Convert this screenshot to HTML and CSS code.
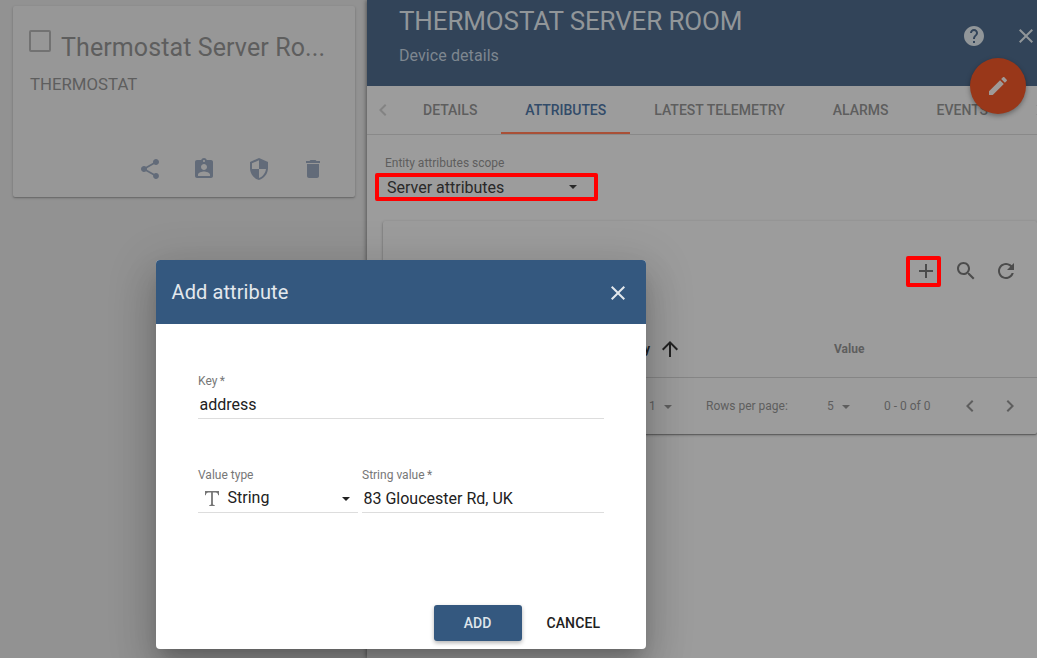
FILE: index.html
```html
<!DOCTYPE html>
<html lang="en">
<head>
<meta charset="utf-8">
<title>Device details</title>
<link rel="stylesheet" href="styles.css">
</head>
<body>
<div class="page">
  <aside class="devices">
    <article class="card">
      <div class="card-head"><span class="checkbox"></span><h2>Thermostat Server Ro...</h2></div>
      <p class="card-type">THERMOSTAT</p>
      <div class="card-actions">
        <svg class="icon" viewBox="0 0 24 24"><path d="M18 16.08c-.76 0-1.44.3-1.96.77L8.91 12.7c.05-.23.09-.46.09-.7s-.04-.47-.09-.7l7.05-4.11c.54.5 1.25.81 2.04.81 1.66 0 3-1.34 3-3s-1.34-3-3-3-3 1.34-3 3c0 .24.04.47.09.7L8.04 9.81C7.5 9.31 6.79 9 6 9c-1.66 0-3 1.34-3 3s1.34 3 3 3c.79 0 1.5-.31 2.04-.81l7.12 4.16c-.05.21-.08.43-.08.65 0 1.61 1.31 2.92 2.92 2.92s2.92-1.31 2.92-2.92-1.31-2.92-2.92-2.92z"/></svg>
        <svg class="icon" viewBox="0 0 24 24"><path d="M19 3h-4.18C14.4 1.84 13.3 1 12 1s-2.4.84-2.82 2H5c-1.1 0-2 .9-2 2v14c0 1.1.9 2 2 2h14c1.1 0 2-.9 2-2V5c0-1.1-.9-2-2-2zm-7 0c.55 0 1 .45 1 1s-.45 1-1 1-1-.45-1-1 .45-1 1-1zm0 4c1.66 0 3 1.34 3 3s-1.34 3-3 3-3-1.34-3-3 1.34-3 3-3zm6 12H6v-1.4c0-2 4-3.1 6-3.1s6 1.1 6 3.1V19z"/></svg>
        <svg class="icon" viewBox="0 0 24 24"><path d="M12 1L3 5v6c0 5.55 3.84 10.74 9 12 5.16-1.26 9-6.45 9-12V5l-9-4zm0 10.99h7c-.53 4.12-3.28 7.79-7 8.94V12H5V6.3l7-3.11v8.8z"/></svg>
        <svg class="icon" viewBox="0 0 24 24"><path d="M6 19c0 1.100.9 2 2 2h8c1.100 0 2-.9 2-2V7H6v12zM19 4h-3.500l-1-1h-5l-1 1H5v2h14V4z"/></svg>
      </div>
    </article>
  </aside>

  <main class="panel">
    <header class="panel-head">
      <div class="titles"><h1>THERMOSTAT SERVER ROOM</h1><p>Device details</p></div>
      <div class="head-tools">
        <svg class="icon" viewBox="0 0 24 24"><path d="M12 2C6.480 2 2 6.480 2 12s4.480 10 10 10 10-4.480 10-10S17.520 2 12 2zm1 17h-2v-2h2v2zm2.070-7.750l-.9.920C13.450 12.900 13 13.500 13 15h-2v-.5c0-1.100.45-2.100 1.170-2.830l1.240-1.260c.37-.36.59-.86.59-1.410 0-1.100-.9-2-2-2s-2 .9-2 2H8c0-2.210 1.790-4 4-4s4 1.790 4 4c0 .88-.36 1.680-.93 2.250z"/></svg>
        <svg class="icon" viewBox="0 0 24 24"><path d="M19 6.410L17.590 5 12 10.590 6.410 5 5 6.410 10.590 12 5 17.590 6.410 19 12 13.410 17.590 19 19 17.590 13.410 12z"/></svg>
      </div>
      <button class="fab" aria-label="Edit"><svg class="icon" viewBox="0 0 24 24"><path d="M3 17.250V21h3.750L17.810 9.940l-3.750-3.750L3 17.250zM20.710 7.040c.39-.39.39-1.020 0-1.410l-2.340-2.340c-.39-.39-1.020-.39-1.410 0l-1.830 1.830 3.750 3.750 1.830-1.830z"/></svg></button>
    </header>

    <nav class="tabs">
      <svg class="tab-arrow prev" viewBox="0 0 24 24"><path d="M15.410 7.410L14 6l-6 6 6 6 1.410-1.410L10.830 12z"/></svg>
      <a class="tab">DETAILS</a>
      <a class="tab active">ATTRIBUTES</a>
      <a class="tab telemetry">LATEST TELEMETRY</a>
      <a class="tab">ALARMS</a>
      <a class="tab">EVENTS</a>
      <svg class="tab-arrow next" viewBox="0 0 24 24"><path d="M10 6L8.590 7.410 13.170 12l-4.580 4.590L10 18l6-6z"/></svg>
    </nav>

    <section class="scope">
      <label>Entity attributes scope</label>
      <div class="scope-select"><span>Server attributes</span><i class="caret"></i></div>
    </section>

    <section class="table">
      <div class="toolbar">
        <span class="add-mark"><svg class="icon" viewBox="0 0 24 24"><path d="M19 13h-6v6h-2v-6H5v-2h6V5h2v6h6v2z"/></svg></span>
        <svg class="icon" viewBox="0 0 24 24"><path d="M15.500 14h-.79l-.28-.27C15.410 12.590 16 11.110 16 9.500 16 5.910 13.090 3 9.500 3S3 5.910 3 9.500 5.910 16 9.500 16c1.610 0 3.090-.59 4.230-1.570l.27.28v.79l5 4.990L20.490 19l-4.990-5zm-6 0C7.010 14 5 11.990 5 9.500S7.010 5 9.500 5 14 7.010 14 9.500 11.990 14 9.500 14z"/></svg>
        <svg class="icon" viewBox="0 0 24 24"><path d="M17.650 6.350C16.200 4.900 14.210 4 12 4c-4.420 0-7.990 3.580-7.990 8s3.570 8 7.990 8c3.730 0 6.840-2.550 7.730-6h-2.080c-.82 2.330-3.040 4-5.650 4-3.310 0-6-2.690-6-6s2.690-6 6-6c1.660 0 3.140.69 4.220 1.780L13 11h7V4l-2.350 2.350z"/></svg>
      </div>
      <div class="table-head">
        <span class="col-key">Key</span>
        <svg class="icon sort" viewBox="0 0 24 24"><path d="M4 12l1.410 1.410L11 7.830V20h2V7.830l5.580 5.590L20 12l-8-8-8 8z"/></svg>
        <span class="col-value">Value</span>
      </div>
      <div class="pager">
        <span class="page-no">1</span><i class="caret"></i>
        <span class="rows-label">Rows per page:</span>
        <span class="rows-no">5</span><i class="caret"></i>
        <span class="range">0 - 0 of 0</span>
        <svg class="icon" viewBox="0 0 24 24"><path d="M15.410 7.410L14 6l-6 6 6 6 1.410-1.410L10.830 12z"/></svg>
        <svg class="icon" viewBox="0 0 24 24"><path d="M10 6L8.590 7.410 13.170 12l-4.580 4.590L10 18l6-6z"/></svg>
      </div>
    </section>
  </main>
</div>

<div class="dialog" role="dialog">
  <header class="dialog-head">
    <h2>Add attribute</h2>
    <svg class="icon" viewBox="0 0 24 24"><path d="M19 6.410L17.590 5 12 10.590 6.410 5 5 6.410 10.590 12 5 17.590 6.410 19 12 13.410 17.590 19 19 17.590 13.410 12z"/></svg>
  </header>
  <div class="dialog-body">
    <div class="field">
      <label>Key<span class="req">*</span></label>
      <div class="value">address</div>
    </div>
    <div class="row">
      <div class="field type">
        <label>Value type</label>
        <div class="value">
          <svg class="type-icon" viewBox="0 0 14 15"><path d="M0 0H14V4.200H13.200C12.900 2.300 12.200 1.400 10.500 1.400H7.900V12.500C7.900 13.600 8.400 14.100 9.800 14.200V15H4.200V14.200C5.600 14.100 6.100 13.600 6.100 12.500V1.400H3.500C1.800 1.400 1.100 2.300.8 4.200H0Z"/></svg>
          <span>String</span><i class="caret"></i>
        </div>
      </div>
      <div class="field string">
        <label>String value<span class="req">*</span></label>
        <div class="value">83 Gloucester Rd, UK</div>
      </div>
    </div>
  </div>
  <footer class="dialog-actions">
    <button class="btn primary">ADD</button>
    <button class="btn cancel">CANCEL</button>
  </footer>
</div>
</body>
</html>
```
FILE: styles.css
```css
* { box-sizing: border-box; }
body { margin: 0; width: 1037px; height: 658px; overflow: hidden; position: relative; font-family: Roboto, "Liberation Sans", sans-serif; background: #929292; }
h1, h2, p { margin: 0; font-weight: 400; }
button { border: 0; padding: 0; background: none; font: inherit; }
.icon { width: 24px; height: 24px; fill: currentColor; flex: none; display: block; }
.caret { width: 0; height: 0; border: 4px solid transparent; border-top-color: currentColor; border-bottom: 0; flex: none; }
.page { display: flex; height: 658px; }

.devices { width: 367px; flex: none; padding: 6px 12px 0 13px; }
.card { height: 191px; padding: 23px 30px 0 16px; display: flex; flex-direction: column; background: #979797; border-radius: 2px; box-shadow: 0 1px 3px rgba(0,0,0,.2), 0 1px 1px rgba(0,0,0,.14); color: #5e5e5e; }
.card-head { display: flex; height: 36px; gap: 10px; }
.checkbox { width: 22px; height: 22px; margin-top: 1px; border: 2px solid #727272; border-radius: 2px; flex: none; }
.card-head h2 { font-size: 25px; line-height: 38px; white-space: nowrap; letter-spacing: .1px; }
.card-type { font-size: 16.800px; line-height: 24px; margin-top: 7px; padding-left: 1px; }
.card-actions { display: flex; gap: 30.500px; justify-content: flex-end; margin: 61px 0 0; color: #626b79; }

.panel { flex: 1; min-width: 0; background: #9c9c9c; box-shadow: -1px 0 4px rgba(0,0,0,.4); overflow: hidden; color: #5e5e5e; }
.panel-head { position: relative; height: 86px; padding: 3px 0 0 32px; display: flex; background: #324459; color: #919699; }
.titles { flex: 1; }
.titles h1 { font-size: 26px; line-height: 36px; letter-spacing: -.14px; white-space: nowrap; }
.titles p { font-size: 16px; line-height: 24px; letter-spacing: .08px; margin-top: 5px; color: #7e8790; }
.head-tools { display: flex; gap: 28px; margin: 21px -1px 0 0; }
.fab { position: absolute; left: 603px; top: 58px; width: 56px; height: 56px; border-radius: 50%; display: flex; align-items: center; justify-content: center; background: #993719; color: #9f9a98; box-shadow: 0 2px 5px rgba(0,0,0,.35); z-index: 1; }
.tabs { display: flex; height: 49px; border-bottom: 1px solid #898989; overflow: hidden; }
.tab-arrow { width: 24px; height: 24px; flex: none; fill: #838383; margin: 12px 4px 0; }
.tab-arrow.next { fill: #5e5e5e; margin: 12px 0 0 16px; }
.tab { padding: 0 24px; line-height: 48px; font-size: 14px; font-weight: 500; white-space: nowrap; flex: none; border-bottom: 2px solid transparent; }
.tab.active { letter-spacing: -.05px; color: #324b69; border-color: #a95037; }
.tab.telemetry { letter-spacing: .03px; }

.scope { height: 86px; padding: 19px 0 0 8px; }
.scope label { display: block; font-size: 12px; line-height: 18px; padding-left: 10px; }
.scope-select { width: 223px; height: 28px; margin-top: 1px; padding: 0 17px 0 8px; display: flex; align-items: center; justify-content: space-between; border: 4px solid #f00; border-radius: 2px; font-size: 16px; color: #292929; }

.table { height: 213px; margin-left: 16px; border-radius: 2px; box-shadow: 0 1px 3px rgba(0,0,0,.3), 0 1px 1px rgba(0,0,0,.25); }
.toolbar { display: flex; align-items: center; justify-content: flex-end; height: 100px; padding-right: 19px; gap: 17px; color: #4c4c4c; }
.toolbar .icon:last-child { margin-left: -1px; }
.add-mark { width: 35px; height: 31px; margin-right: -4px; padding-left: 4px; display: flex; align-items: center; border: 4px solid #f00; border-radius: 2px; }
.toolbar .add-mark .icon { margin-left: 0; }
.table-head { display: flex; align-items: center; height: 57px; border-bottom: 1px solid #858585; font-size: 12px; font-weight: 700; }
.col-key { width: 267px; text-align: right; color: #222; }
.sort { color: #222; margin-left: 8px; }
.col-value { margin-left: 152px; }
.pager { display: flex; align-items: center; height: 56px; padding-left: 266px; font-size: 12px; white-space: nowrap; }
.page-no, .rows-no { width: 7px; }
.pager .caret { margin: 2px 0 0 7.500px; }
.rows-label { width: 86px; margin-left: 34.500px; }
.rows-no { margin-left: 35px; }
.range { width: 48px; margin-left: 34.500px; }
.pager .icon { margin-left: 26px; fill: #5e5e5e; }
.pager .icon + .icon { margin-left: 16px; }

.dialog { position: absolute; left: 156px; top: 260px; width: 490px; height: 389px; display: flex; flex-direction: column; border-radius: 4px; overflow: hidden; background: #fff; box-shadow: 0 11px 15px -7px rgba(0,0,0,.2), 0 24px 38px 3px rgba(0,0,0,.14), 0 9px 46px 8px rgba(0,0,0,.12); color: #212121; }
.dialog-head { height: 64px; padding: 2px 16px 0 15.500px; display: flex; align-items: center; justify-content: space-between; background: #34587f; color: #e3e8ed; }
.dialog-head h2 { font-size: 20px; letter-spacing: .1px; margin-bottom: 2px; }
.dialog-body { flex: 1; padding: 49px 42px 0; }
.field label { display: block; font-size: 12px; line-height: 16px; color: #777; }
.req { margin-left: 2.500px; }
.field .value { height: 30px; padding: 1px 1.500px 0; display: flex; align-items: center; font-size: 16px; border-bottom: 1px solid #ddd; }
.row { display: flex; gap: 4px; margin-top: 48px; }
.type { width: 160px; }
.field.type .value { padding: 0 8px 0 7px; }
.type-icon { width: 14px; height: 15px; fill: #757575; margin: 1px 8.500px 0 0; flex: none; }
.type .caret { margin: 2px 0 0 auto; }
.string { flex: 1; }
.dialog-actions { display: flex; gap: 8px; padding: 0 20px 8px 278px; }
.btn { flex: none; height: 36px; padding: 0 16px; border-radius: 3px; font-size: 14px; font-weight: 500; color: #212121; }
.btn.cancel { padding: 0 16.500px; letter-spacing: .1px; }
.btn.primary { width: 88px; padding: 0 17px 0 16px; background: #34587f; color: #dfe5eb; box-shadow: 0 2px 4px rgba(0,0,0,.3); }
```
